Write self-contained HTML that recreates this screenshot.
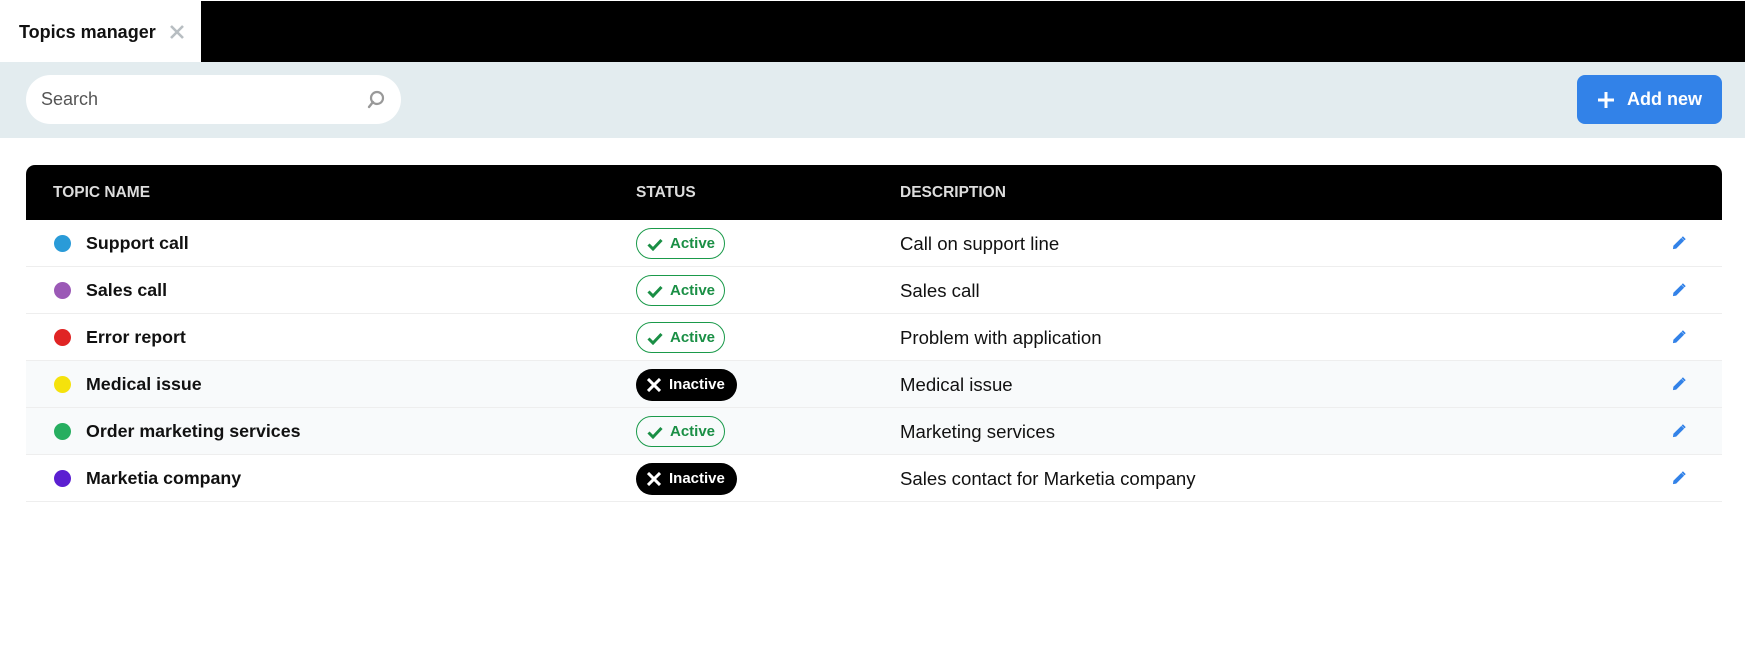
<!DOCTYPE html>
<html><head><meta charset="utf-8"><style>
*{box-sizing:border-box;margin:0;padding:0}
body{width:1745px;height:645px;background:#fff;font-family:"Liberation Sans",sans-serif;position:relative;overflow:hidden}
.topbar{position:absolute;left:0;top:1px;width:1745px;height:61px;background:#000}
.tab{position:absolute;left:0;top:1px;width:201px;height:61px;background:#fff}
.tab span{position:absolute;left:19px;top:21px;font-size:18px;font-weight:bold;color:#111}
.tab svg{position:absolute;left:170px;top:24px}
.tool{position:absolute;left:0;top:62px;width:1745px;height:76px;background:#e3ecef}
.search{position:absolute;left:26px;top:13px;width:375px;height:49px;background:#fff;border-radius:25px}
.search span{position:absolute;left:15px;top:14px;font-size:18px;color:#555}
.search svg{position:absolute;left:341px;top:15px}
.add{position:absolute;left:1577px;top:13px;width:145px;height:49px;background:#3282e8;border-radius:8px;color:#fff;font-weight:bold;font-size:18px}
.add svg{position:absolute;left:20px;top:16px}
.add span{position:absolute;left:50px;top:14px}
.head{position:absolute;left:26px;top:165px;width:1696px;height:55px;background:#000;border-radius:9px 9px 0 0;color:#ddd;font-size:15.5px;font-weight:bold}
.head span{position:absolute;top:19px}
.row{position:absolute;left:26px;width:1696px;height:47px;border-bottom:1px solid #eee}
.row.alt{background:#f8fafb}
.dot{position:absolute;left:28px;top:15px;width:17px;height:17px;border-radius:50%}
.name{position:absolute;left:60px;top:13px;font-size:17.8px;font-weight:bold;color:#111}
.desc{position:absolute;left:874px;top:13px;font-size:18.6px;color:#111}
.pill{position:absolute;left:610px;top:8px;height:31px;border-radius:16px;font-size:15px;font-weight:bold}
.act{width:89px;border:1px solid #1a9a4a;color:#1a8f45}
.act svg{position:absolute;left:10px;top:9px}
.act span{position:absolute;left:33px;top:6px}
.ina{width:101px;background:#000;color:#fff;height:32px}
.ina svg{position:absolute;left:11px;top:9px}
.ina span{position:absolute;left:33px;top:7px}
.pen{position:absolute;left:1646px;top:16px}
</style></head><body>
<div class="topbar"></div>
<div class="tab"><span>Topics manager</span><svg width="14" height="14" viewBox="0 0 14 14"><path d="M1 1L13 13M13 1L1 13" stroke="#b8bec2" stroke-width="2.6"/></svg></div>
<div class="tool">
<div class="search"><span>Search</span><svg width="18" height="20" viewBox="0 0 18 20"><circle cx="10" cy="8" r="6" fill="none" stroke="#999" stroke-width="2.2"/><path d="M6 12L2 17" stroke="#999" stroke-width="2.4" stroke-linecap="round"/></svg></div>
<div class="add"><svg width="18" height="18" viewBox="0 0 18 18"><path d="M9 1V17M1 9H17" stroke="#fff" stroke-width="3"/></svg><span>Add new</span></div>
</div>
<div class="head"><span style="left:27px">TOPIC NAME</span><span style="left:610px">STATUS</span><span style="left:874px">DESCRIPTION</span></div>

<div class="row" style="top:220px"><div class="dot" style="background:#2a9bd8"></div><div class="name">Support call</div><div class="pill act"><svg width="16" height="13" viewBox="0 0 16 13"><path d="M1.5 6.5L6 11L14.5 2" fill="none" stroke="#1a8f45" stroke-width="3"/></svg><span>Active</span></div><div class="desc">Call on support line</div><svg class="pen" width="14" height="14" viewBox="0 0 15 15"><path d="M1 14L1.5 10.5L10 2L13 5L4.5 13.5Z" fill="#3282e8"/><path d="M11 1L14 4" stroke="#3282e8" stroke-width="2"/></svg></div>
<div class="row" style="top:267px"><div class="dot" style="background:#9b59b6"></div><div class="name">Sales call</div><div class="pill act"><svg width="16" height="13" viewBox="0 0 16 13"><path d="M1.5 6.5L6 11L14.5 2" fill="none" stroke="#1a8f45" stroke-width="3"/></svg><span>Active</span></div><div class="desc">Sales call</div><svg class="pen" width="14" height="14" viewBox="0 0 15 15"><path d="M1 14L1.5 10.5L10 2L13 5L4.5 13.5Z" fill="#3282e8"/><path d="M11 1L14 4" stroke="#3282e8" stroke-width="2"/></svg></div>
<div class="row" style="top:314px"><div class="dot" style="background:#e02424"></div><div class="name">Error report</div><div class="pill act"><svg width="16" height="13" viewBox="0 0 16 13"><path d="M1.5 6.5L6 11L14.5 2" fill="none" stroke="#1a8f45" stroke-width="3"/></svg><span>Active</span></div><div class="desc">Problem with application</div><svg class="pen" width="14" height="14" viewBox="0 0 15 15"><path d="M1 14L1.5 10.5L10 2L13 5L4.5 13.5Z" fill="#3282e8"/><path d="M11 1L14 4" stroke="#3282e8" stroke-width="2"/></svg></div>
<div class="row alt" style="top:361px"><div class="dot" style="background:#f5e20c"></div><div class="name">Medical issue</div><div class="pill ina"><svg width="14" height="14" viewBox="0 0 14 14"><path d="M1 1L13 13M13 1L1 13" stroke="#fff" stroke-width="3"/></svg><span>Inactive</span></div><div class="desc">Medical issue</div><svg class="pen" width="14" height="14" viewBox="0 0 15 15"><path d="M1 14L1.5 10.5L10 2L13 5L4.5 13.5Z" fill="#3282e8"/><path d="M11 1L14 4" stroke="#3282e8" stroke-width="2"/></svg></div>
<div class="row alt" style="top:408px"><div class="dot" style="background:#27ae60"></div><div class="name">Order marketing services</div><div class="pill act"><svg width="16" height="13" viewBox="0 0 16 13"><path d="M1.5 6.5L6 11L14.5 2" fill="none" stroke="#1a8f45" stroke-width="3"/></svg><span>Active</span></div><div class="desc">Marketing services</div><svg class="pen" width="14" height="14" viewBox="0 0 15 15"><path d="M1 14L1.5 10.5L10 2L13 5L4.5 13.5Z" fill="#3282e8"/><path d="M11 1L14 4" stroke="#3282e8" stroke-width="2"/></svg></div>
<div class="row" style="top:455px"><div class="dot" style="background:#5b1fd1"></div><div class="name">Marketia company</div><div class="pill ina"><svg width="14" height="14" viewBox="0 0 14 14"><path d="M1 1L13 13M13 1L1 13" stroke="#fff" stroke-width="3"/></svg><span>Inactive</span></div><div class="desc">Sales contact for Marketia company</div><svg class="pen" width="14" height="14" viewBox="0 0 15 15"><path d="M1 14L1.5 10.5L10 2L13 5L4.5 13.5Z" fill="#3282e8"/><path d="M11 1L14 4" stroke="#3282e8" stroke-width="2"/></svg></div>
</body></html>
